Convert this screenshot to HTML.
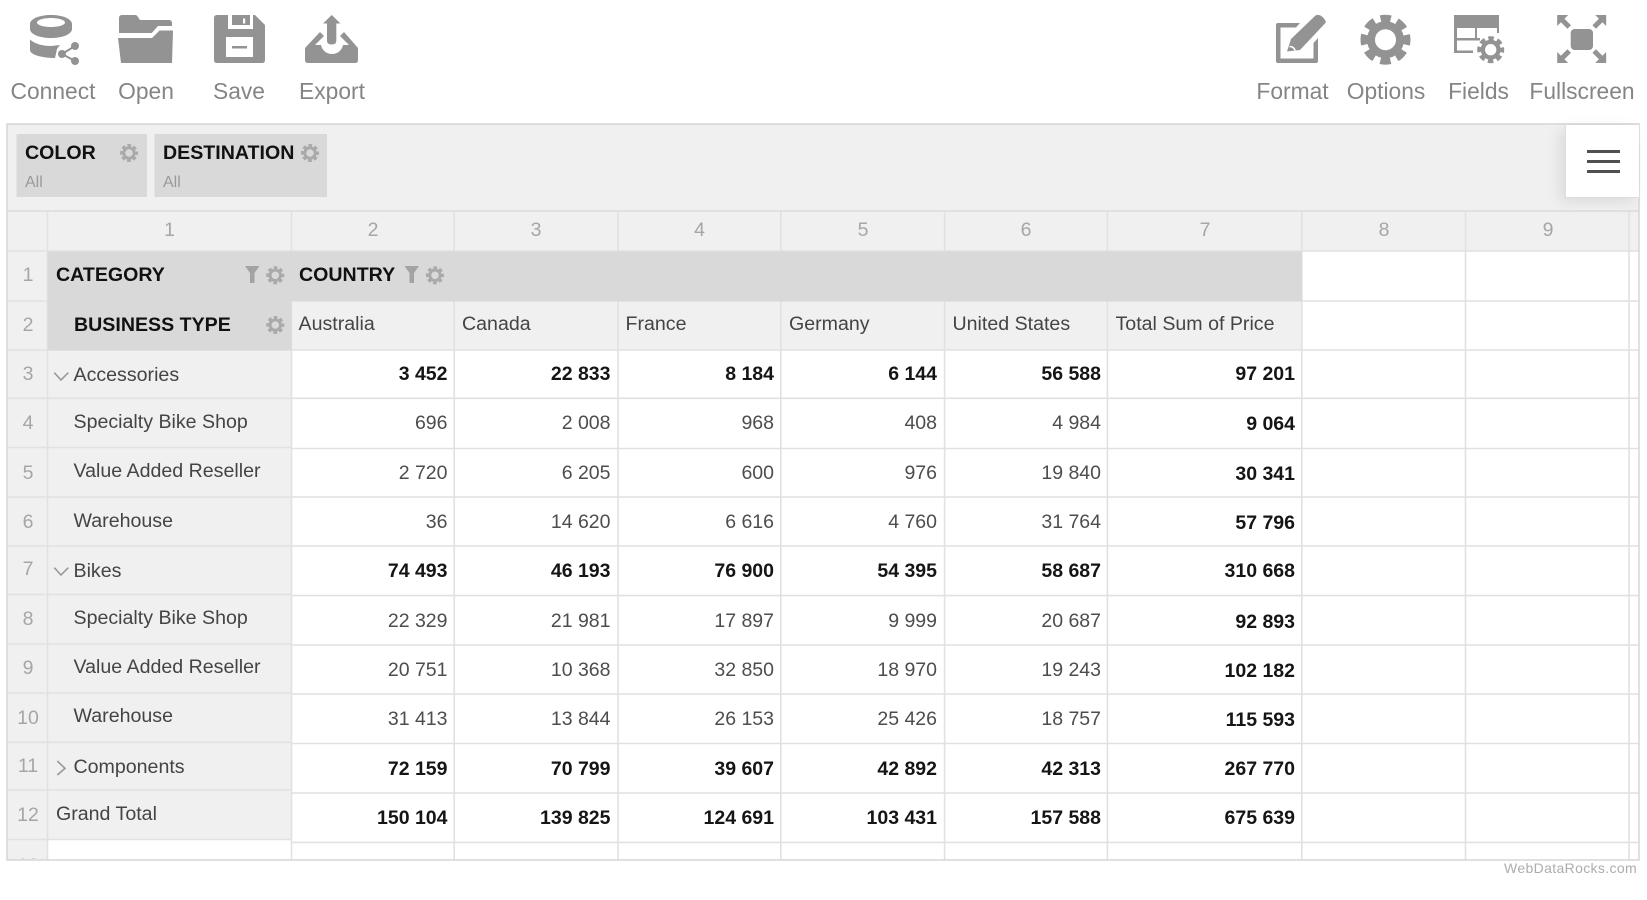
<!DOCTYPE html>
<html lang="en"><head><meta charset="utf-8"><title>Pivot Table</title>
<style>
html,body{margin:0;padding:0;background:#fff;width:1647px;height:900px;overflow:hidden}
#w{position:relative;width:1647px;height:900px;overflow:hidden;font-family:"Liberation Sans",Arial,sans-serif;filter:blur(.3px)}
svg.bg{position:absolute;left:0;top:0}
.t{position:absolute;white-space:nowrap;line-height:24px;margin-top:-12px;font-size:19.6px;color:#444}
.h{font-weight:bold;color:#111;font-size:19.6px}
.tb{font-size:22.8px;color:#858585;transform:translateX(-50%)}
.all{font-size:16px;color:#999}
.cn{font-size:19.5px;color:#a6a6a6;transform:translateX(-50%)}
.r{position:absolute;left:0;width:1647px;height:0}
.r span{position:absolute;white-space:nowrap;line-height:24px;top:-12px;font-size:19.5px;color:#4d4d4d}
.r.b span{font-weight:bold;color:#151515;font-size:19.5px;top:-12px}
.r span.b{font-weight:bold;color:#151515;font-size:19.5px;top:-11px}
.c2{right:1199.5px}.c3{right:1036.5px}.c4{right:873px}.c5{right:710px}.c6{right:546px}.c7{right:352px}
#ham{position:absolute;left:1565px;top:125px;width:73px;height:72px;background:#fff;border-left:1.5px solid #ddd;border-bottom:1.5px solid #ddd;box-shadow:-5px 4px 14px rgba(0,0,0,.09)}
#ham i{position:absolute;left:21px;width:32.5px;height:3px;background:#505050}
#clip{position:absolute;left:8px;top:842px;width:39px;height:17px;overflow:hidden}
</style></head><body><div id="w">
<svg class="bg" width="1647" height="900" viewBox="0 0 1647 900" xmlns="http://www.w3.org/2000/svg">
<defs>
<g id="gear"><circle r="14.5" fill="none" stroke="currentColor" stroke-width="8"/><circle r="21.5" fill="none" stroke="currentColor" stroke-width="7" stroke-dasharray="10.3 6.59" stroke-dashoffset="5.15"/></g>
<g id="fsa"><path d="M-24.5-24H-13.5L-24.5-13Z" fill="#939393"/><path d="M-21-20.5L-12.5-12" stroke="#939393" stroke-width="5"/></g>
</defs>
<!-- backgrounds -->
<rect x="7" y="124" width="1632" height="87" fill="#f0f0f0"/>
<rect x="7" y="211" width="1632" height="40" fill="#f0f0f0"/>
<rect x="7" y="211" width="40.5" height="649" fill="#f0f0f0"/>
<rect x="47.5" y="350" width="244" height="489.5" fill="#f0f0f0"/>
<rect x="291.5" y="301" width="1011" height="49" fill="#f0f0f0"/>
<!-- grid lines -->
<g stroke="#e1e1e1" stroke-width="1.6" fill="none">
<path d="M47.5 211V860M291.5 211V860M454.2 211V860M618 211V860M780.8 211V860M944.6 211V860M1107.4 211V860M1301.8 211V860M1465.5 211V860M1629 211V860"/>
<path d="M7 251H1639M1302 301H1639M7 301H47"/>
<path d="M291.5 350H1639M291.5 398.3H1639M291.5 448.5H1639M291.5 497H1639M291.5 546H1639M291.5 595.6H1639M291.5 645H1639M291.5 694H1639M291.5 743.5H1639M291.5 793H1639M291.5 842.4H1639"/>
<path d="M7 350H291.5M7 398.3H291.5M7 447.5H291.5M7 497H291.5M7 546H291.5M7 594.5H291.5M7 644H291.5M7 693H291.5M7 742.3H291.5M7 790H291.5M7 839.5H291.5"/>
</g>
<!-- header grey -->
<rect x="47.5" y="251.5" width="1254.5" height="50" fill="#d9d9d9"/>
<rect x="47.5" y="301" width="244" height="49.5" fill="#d9d9d9"/>
<rect x="16.5" y="134" width="130.5" height="63" fill="#d9d9d9"/>
<rect x="154.5" y="134" width="172.5" height="63" fill="#d9d9d9"/>
<path d="M7 211H1639" stroke="#dcdcdc" stroke-width="1.6"/>
<rect x="7" y="124" width="1632" height="736" fill="none" stroke="#d8d8d8" stroke-width="1.6"/>
<!-- small gears and filters -->
<g color="#a9a9a9">
<use href="#gear" transform="translate(129,153) scale(.36)"/>
<use href="#gear" transform="translate(310,153) scale(.36)"/>
<use href="#gear" transform="translate(275.3,275.3) scale(.36)"/>
<use href="#gear" transform="translate(435,275.3) scale(.36)"/>
<use href="#gear" transform="translate(275.3,325) scale(.36)"/>
</g>
<path d="M245 266H259.5L254.5 273V283H250V273ZM404.5 266H419L414 273V283H409.5V273Z" fill="#a3a3a3"/>
<!-- chevrons -->
<g fill="none" stroke="#999" stroke-width="1.6">
<path d="M54.3 372.7L61 380L68.3 372.7M54.3 567.7L61 575L68.3 567.7M57.3 761L65 768.3L57.3 775"/>
</g>
<!-- Connect -->
<g fill="#939393">
<path fill-rule="evenodd" d="M30 24C30 19 39 15 51 15S72 19 72 24V29C72 34 63 38 51 38S30 34 30 29ZM37 22.5C37 25 43.5 27 51 27S65 25 65 22.5 58.500 18 51 18 37 20 37 22.5Z"/>
<path d="M30 39.500C35 44 43 46 51 46L60 45L57 49L55 58C43 58 30 55 30 50Z"/>
<circle cx="75" cy="46" r="4"/><circle cx="62" cy="54" r="4"/><circle cx="75" cy="61" r="4"/>
<path d="M75 46L62 54L75 61" fill="none" stroke="#939393" stroke-width="2"/>
<!-- Open -->
<path d="M119 33V18Q119 15 122 15H135Q137 15 138 17L140 20H169Q172 20 172 23V26H158L151.700 33Z"/>
<path d="M118 38H152L159.500 30.500H173L172 63H121Z"/>
<!-- Save -->
<path fill-rule="evenodd" d="M214 18Q214 15 217 15H255L265 25V60Q265 63 262 63H217Q214 63 214 60ZM226 37V57H253V37ZM228 15V29H253V15Z"/>
<path d="M232 15H250V25H232ZM232 46H247V48.500H232Z"/>
<rect x="243" y="18.500" width="2.200" height="5" fill="#fff"/>
<!-- Export -->
<path d="M331.700 15L340.500 23.500H336.300V41Q336.300 44.500 331.700 44.500T327 41V23.500H323Z"/>
<path d="M305 48L320 32L324 36L315 45H321C322 50 326 54 332 54S342 50 343 45H349L340 36L344 32L358 48V60Q358 63 355 63H308Q305 63 305 60Z"/>
<!-- Format -->
<path d="M1276 25Q1276 23 1278 23H1300L1296 27.500H1280.500V58.500H1313.500V43L1318 38V61Q1318 63 1316 63H1278Q1276 63 1276 61Z"/>
<path d="M1287 51.500L1291 39L1315.500 15.500Q1319.500 13.500 1323.500 18T1324.500 24L1300 50Z"/>
<path d="M1289.500 46.500Q1294 46.500 1295 50.500" fill="none" stroke="#fff" stroke-width="1.500"/>
<!-- Fields -->
<path d="M1454 15H1499V33H1497V28H1477V38H1480V40.500H1457V50.500H1473V53H1454Z"/>
<path d="M1457 28H1475V38H1457Z" fill="#fff"/>
<!-- Fullscreen -->
<rect x="1570.700" y="29" width="22.300" height="21" rx="4"/>
</g>
<g color="#939393"><use href="#gear" transform="translate(1385.500,39.700)"/><use href="#gear" transform="translate(1490.700,49.700) scale(.54)"/></g>
<g fill="none">
<use href="#fsa" transform="translate(1581.700,39)"/>
<use href="#fsa" transform="translate(1581.700,39) scale(-1,1)"/>
<use href="#fsa" transform="translate(1581.700,39) scale(1,-1)"/>
<use href="#fsa" transform="translate(1581.700,39) scale(-1,-1)"/>
</g>
</svg>

<span class="t tb" style="left:53px;top:91px">Connect</span>
<span class="t tb" style="left:146px;top:91px">Open</span>
<span class="t tb" style="left:239px;top:91px">Save</span>
<span class="t tb" style="left:332px;top:91px">Export</span>
<span class="t tb" style="left:1292.500px;top:91px">Format</span>
<span class="t tb" style="left:1386px;top:91px">Options</span>
<span class="t tb" style="left:1478.500px;top:91px">Fields</span>
<span class="t tb" style="left:1582px;top:91px">Fullscreen</span>

<span class="t h" style="left:25px;top:153px">COLOR</span>
<span class="t all" style="left:25px;top:183px">All</span>
<span class="t h" style="left:163px;top:153px">DESTINATION</span>
<span class="t all" style="left:163px;top:183px">All</span>

<div id="ham"><i style="top:24.500px"></i><i style="top:34.500px"></i><i style="top:44.500px"></i></div>

<span class="t cn" style="left:169.500px;top:230px">1</span>
<span class="t cn" style="left:373px;top:230px">2</span>
<span class="t cn" style="left:536px;top:230px">3</span>
<span class="t cn" style="left:699.500px;top:230px">4</span>
<span class="t cn" style="left:863px;top:230px">5</span>
<span class="t cn" style="left:1026px;top:230px">6</span>
<span class="t cn" style="left:1205px;top:230px">7</span>
<span class="t cn" style="left:1384px;top:230px">8</span>
<span class="t cn" style="left:1548px;top:230px">9</span>

<span class="t cn" style="left:28px;top:275px">1</span>
<span class="t cn" style="left:28px;top:324.500px">2</span>
<span class="t cn" style="left:28px;top:374px">3</span>
<span class="t cn" style="left:28px;top:423px">4</span>
<span class="t cn" style="left:28px;top:472.500px">5</span>
<span class="t cn" style="left:28px;top:522px">6</span>
<span class="t cn" style="left:28px;top:569px">7</span>
<span class="t cn" style="left:28px;top:618.500px">8</span>
<span class="t cn" style="left:28px;top:668px">9</span>
<span class="t cn" style="left:28px;top:717.500px">10</span>
<span class="t cn" style="left:28px;top:765.500px">11</span>
<span class="t cn" style="left:28px;top:815px">12</span>
<div id="clip"><span class="t cn" style="left:20px;top:24px">13</span></div>

<span class="t h" style="left:56px;top:275px">CATEGORY</span>
<span class="t h" style="left:299px;top:275px">COUNTRY</span>
<span class="t h" style="left:74px;top:325px">BUSINESS TYPE</span>
<span class="t" style="left:298.500px;top:324px">Australia</span>
<span class="t" style="left:462px;top:324px">Canada</span>
<span class="t" style="left:625.500px;top:324px">France</span>
<span class="t" style="left:789px;top:324px">Germany</span>
<span class="t" style="left:952.500px;top:324px">United States</span>
<span class="t" style="left:1115.500px;top:324px">Total Sum of Price</span>

<span class="t" style="left:73.500px;top:375px">Accessories</span>
<span class="t" style="left:73.500px;top:422px">Specialty Bike Shop</span>
<span class="t" style="left:73.500px;top:470.500px">Value Added Reseller</span>
<span class="t" style="left:73.500px;top:521px">Warehouse</span>
<span class="t" style="left:73.500px;top:571px">Bikes</span>
<span class="t" style="left:73.500px;top:617.500px">Specialty Bike Shop</span>
<span class="t" style="left:73.500px;top:667px">Value Added Reseller</span>
<span class="t" style="left:73.500px;top:716px">Warehouse</span>
<span class="t" style="left:73.500px;top:767px">Components</span>
<span class="t" style="left:56px;top:814px">Grand Total</span>

<div class="r b" style="top:374px"><span class="c2">3 452</span><span class="c3">22 833</span><span class="c4">8 184</span><span class="c5">6 144</span><span class="c6">56 588</span><span class="c7">97 201</span></div>
<div class="r" style="top:423px"><span class="c2">696</span><span class="c3">2 008</span><span class="c4">968</span><span class="c5">408</span><span class="c6">4 984</span><span class="c7 b">9 064</span></div>
<div class="r" style="top:472.500px"><span class="c2">2 720</span><span class="c3">6 205</span><span class="c4">600</span><span class="c5">976</span><span class="c6">19 840</span><span class="c7 b">30 341</span></div>
<div class="r" style="top:522px"><span class="c2">36</span><span class="c3">14 620</span><span class="c4">6 616</span><span class="c5">4 760</span><span class="c6">31 764</span><span class="c7 b">57 796</span></div>
<div class="r b" style="top:571px"><span class="c2">74 493</span><span class="c3">46 193</span><span class="c4">76 900</span><span class="c5">54 395</span><span class="c6">58 687</span><span class="c7">310 668</span></div>
<div class="r" style="top:620.500px"><span class="c2">22 329</span><span class="c3">21 981</span><span class="c4">17 897</span><span class="c5">9 999</span><span class="c6">20 687</span><span class="c7 b">92 893</span></div>
<div class="r" style="top:670px"><span class="c2">20 751</span><span class="c3">10 368</span><span class="c4">32 850</span><span class="c5">18 970</span><span class="c6">19 243</span><span class="c7 b">102 182</span></div>
<div class="r" style="top:719px"><span class="c2">31 413</span><span class="c3">13 844</span><span class="c4">26 153</span><span class="c5">25 426</span><span class="c6">18 757</span><span class="c7 b">115 593</span></div>
<div class="r b" style="top:768.500px"><span class="c2">72 159</span><span class="c3">70 799</span><span class="c4">39 607</span><span class="c5">42 892</span><span class="c6">42 313</span><span class="c7">267 770</span></div>
<div class="r b" style="top:818px"><span class="c2">150 104</span><span class="c3">139 825</span><span class="c4">124 691</span><span class="c5">103 431</span><span class="c6">157 588</span><span class="c7">675 639</span></div>

<span class="t" style="right:10px;top:868px;font-size:14px;letter-spacing:.35px;color:#adadad">WebDataRocks.com</span>
</div></body></html>
